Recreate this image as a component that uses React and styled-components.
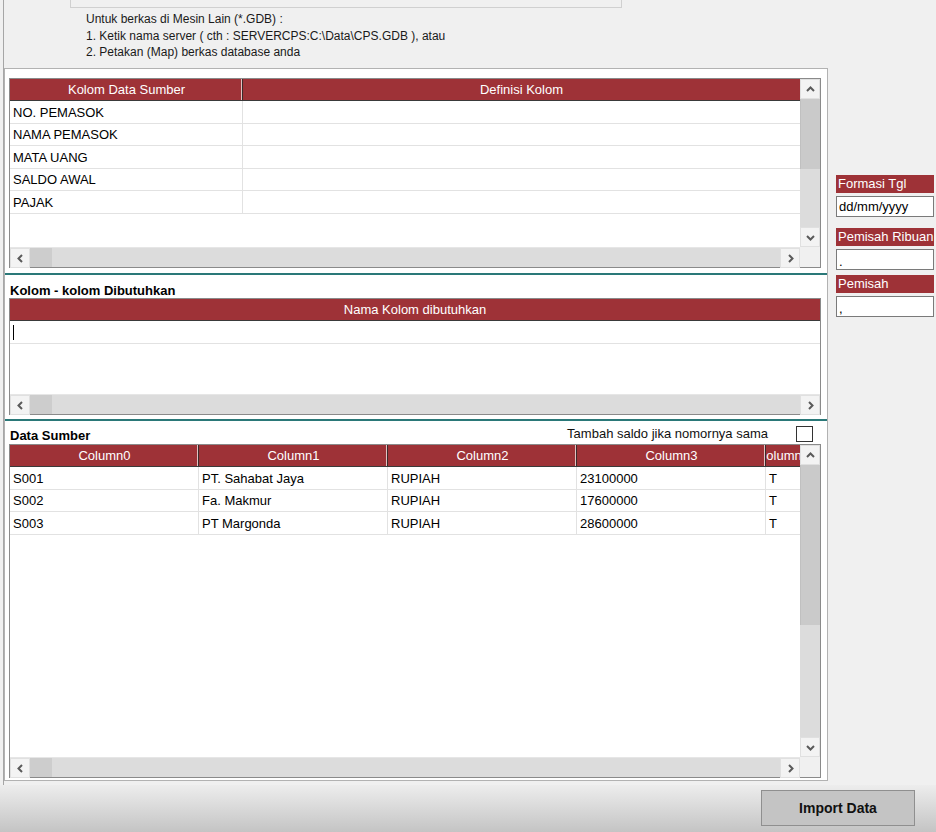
import React from 'react';
import styled, { createGlobalStyle } from 'styled-components';

const GlobalStyle = createGlobalStyle`
  html, body { margin: 0; padding: 0; }
  body { font-family: "Liberation Sans", Arial, sans-serif; background: #f0f0f0; }
  * { box-sizing: border-box; }
`;

const Page = styled.div`
  width: 936px;
  height: 832px;
  background: #f0f0f0;
  overflow: hidden;
  display: flex;
  flex-direction: column;
`;

const Workspace = styled.div`
  height: 785px;
  margin-left: 3px;
  border-left: 1px solid #a6a6a6;
  display: flex;
  flex-direction: column;
`;

const HintBox = styled.div`
  margin-left: 66px;
  width: 552px;
  height: 8px;
  border: 1px solid #d0d0d0;
  border-top: none;
  background: #f0f0f0;
`;

const Instructions = styled.div`
  height: 60px;
  padding-left: 82px;
  padding-top: 3px;
  font-size: 12px;
  line-height: 16.5px;
  color: #1a1a1a;
`;

const MainRow = styled.div`
  display: flex;
  align-items: flex-start;
`;

const MainPanel = styled.div`
  width: 824px;
  height: 713px;
  border: 1px solid #b2b2b2;
  background: #fff;
  display: flex;
  flex-direction: column;
  padding: 9px 0 2px 0;
`;

const GridFrame = styled.div`
  margin: 0 6px 0 4px;
  height: ${p => p.$height}px;
  border: 1px solid #8a8a8a;
  background: #fff;
  flex: 0 0 auto;
`;

const GridBody = styled.div`
  height: 100%;
  display: grid;
  grid-template-columns: ${p => (p.$hasV ? '1fr 20px' : '1fr')};
  grid-template-rows: 1fr 20px;
`;

const Viewport = styled.div`
  overflow: hidden;
  min-width: 0;
`;

const HeaderRow = styled.div`
  display: flex;
  height: 22px;
  background: #9e3237;
  border-bottom: 1px solid #3a3a3a;
`;

const HeaderCell = styled.div`
  flex: ${p => (p.$width ? `0 0 ${p.$width}px` : '1 1 auto')};
  min-width: 0;
  display: flex;
  align-items: center;
  justify-content: center;
  overflow: hidden;
  white-space: nowrap;
  color: #fff;
  font-size: 13px;
  box-shadow: ${p => (p.$last ? 'none' : 'inset -1px 0 0 #3a2a2a, inset -2px 0 0 #e2c2c2')};
`;

const DataRow = styled.div`
  display: flex;
  height: ${p => p.$h}px;
`;

const DataCell = styled.div`
  flex: ${p => (p.$width ? `0 0 ${p.$width}px` : '1 1 auto')};
  min-width: 0;
  display: flex;
  align-items: center;
  padding-left: 3px;
  padding-top: 1px;
  font-size: 13px;
  color: #000;
  white-space: nowrap;
  overflow: hidden;
  border-bottom: 1px solid #e2e2e2;
  border-right: ${p => (p.$last ? 'none' : '1px solid #e2e2e2')};
`;

const Caret = styled.span`
  display: inline-block;
  width: 1px;
  height: 15px;
  background: #000;
`;

const VScroll = styled.div`
  display: flex;
  flex-direction: column;
  background: #dcdcdc;
`;

const HScroll = styled.div`
  display: flex;
  background: #dcdcdc;
  border-top: 1px solid #e6e6e6;
`;

const ArrowBtn = styled.div`
  flex: 0 0 20px;
  width: 20px;
  height: 20px;
  display: flex;
  align-items: center;
  justify-content: center;
  background: #f3f3f3;
  border: 1px solid #e0e0e0;
`;

const VThumb = styled.div`
  flex: 0 0 ${p => p.$size}px;
  margin-top: ${p => p.$start}px;
  background: #cacaca;
  border-left: 1px solid #c0c0c0;
`;

const HThumb = styled.div`
  flex: 0 0 ${p => p.$size}px;
  background: #cdcdcd;
`;

const Spacer = styled.div`
  flex: 1 1 auto;
`;

const Corner = styled.div`
  background: #f0f0f0;
`;

const Separator = styled.div`
  height: 2px;
  background: #2a7878;
  margin-top: ${p => p.$mt}px;
  flex: 0 0 auto;
`;

const SectionLabel = styled.div`
  height: 23px;
  padding: 8px 0 0 5px;
  font-size: 13px;
  line-height: 16px;
  font-weight: bold;
  color: #000;
  flex: 0 0 auto;
`;

const LabelRow = styled.div`
  height: 23px;
  display: flex;
  justify-content: space-between;
  align-items: flex-end;
  padding: 0 14px 0 5px;
  flex: 0 0 auto;
`;

const BoldText = styled.span`
  font-size: 13px;
  line-height: 16px;
  font-weight: bold;
  color: #000;
`;

const CheckGroup = styled.label`
  align-self: flex-start;
  margin-top: 5px;
  display: flex;
  align-items: center;
  gap: 28px;
  font-size: 13px;
  line-height: 16px;
  color: #111;
`;

const CheckBox = styled.span`
  width: 17px;
  height: 16px;
  border: 1px solid #333;
  background: #fff;
`;

const SidePanel = styled.div`
  margin-left: 8px;
  margin-top: 107px;
  width: 98px;
  display: flex;
  flex-direction: column;
`;

const FieldGroup = styled.div`
  margin-top: ${p => p.$mt}px;
  display: flex;
  flex-direction: column;
  gap: 3px;
`;

const FieldLabel = styled.div`
  height: 18px;
  background: #9e3237;
  color: #fff;
  font-size: 13px;
  line-height: 18px;
  padding-left: 2px;
  white-space: nowrap;
  overflow: hidden;
`;

const FieldInput = styled.div`
  height: 21px;
  border: 1px solid #7a7a7a;
  background: #fff;
  font-size: 13px;
  line-height: ${p => (p.$low ? '24px' : '19px')};
  padding-left: 2px;
  color: #000;
`;

const Footer = styled.div`
  flex: 1 1 auto;
  background: linear-gradient(#ededed, #c4c4c4);
  display: flex;
  justify-content: flex-end;
  padding: 5px 21px 0 0;
`;

const ImportButton = styled.button`
  width: 154px;
  height: 36px;
  background: #c4c4c4;
  border: 1px solid #8f8f8f;
  font-family: "Liberation Sans", Arial, sans-serif;
  font-size: 14px;
  font-weight: bold;
  color: #111;
  padding: 0;
`;

function Chevron({ dir }) {
  const pts = {
    up: '1,6 4.5,2.5 8,6',
    down: '1,3 4.5,6.5 8,3',
    left: '6,1 2.5,4.5 6,8',
    right: '3,1 6.5,4.5 3,8',
  }[dir];
  return (
    <svg width="9" height="9" viewBox="0 0 9 9">
      <polyline points={pts} fill="none" stroke="#5a5a5a" strokeWidth="2" />
    </svg>
  );
}

function DataGrid({ height, columns, rows, vThumb, caret }) {
  const hasV = !!vThumb;
  return (
    <GridFrame $height={height}>
      <GridBody $hasV={hasV}>
        <Viewport>
          <HeaderRow>
            {columns.map((c, i) => (
              <HeaderCell key={i} $width={c.width} $last={i === columns.length - 1}>
                {c.title}
              </HeaderCell>
            ))}
          </HeaderRow>
          {rows.map((r, ri) => (
            <DataRow key={ri} $h={22.5}>
              {columns.map((c, ci) => (
                <DataCell key={ci} $width={c.width} $last={ci === columns.length - 1}>
                  {caret && ri === 0 && ci === 0 ? <Caret /> : r[ci]}
                </DataCell>
              ))}
            </DataRow>
          ))}
        </Viewport>
        {hasV && (
          <VScroll>
            <ArrowBtn><Chevron dir="up" /></ArrowBtn>
            <VThumb $start={vThumb.start} $size={vThumb.size} />
            <Spacer />
            <ArrowBtn><Chevron dir="down" /></ArrowBtn>
          </VScroll>
        )}
        <HScroll>
          <ArrowBtn><Chevron dir="left" /></ArrowBtn>
          <HThumb $size={22} />
          <Spacer />
          <ArrowBtn><Chevron dir="right" /></ArrowBtn>
        </HScroll>
        {hasV && <Corner />}
      </GridBody>
    </GridFrame>
  );
}

const sourceCols = [
  { title: 'Kolom Data Sumber', width: 233 },
  { title: 'Definisi Kolom' },
];
const sourceRows = [
  ['NO. PEMASOK', ''],
  ['NAMA PEMASOK', ''],
  ['MATA UANG', ''],
  ['SALDO AWAL', ''],
  ['PAJAK', ''],
];

const neededCols = [{ title: 'Nama Kolom dibutuhkan' }];

const dataCols = [
  { title: 'Column0', width: 189 },
  { title: 'Column1', width: 189 },
  { title: 'Column2', width: 189 },
  { title: 'Column3', width: 189 },
  { title: 'Column4', width: 34 },
];
const dataRows = [
  ['S001', 'PT. Sahabat Jaya', 'RUPIAH', '23100000', 'T'],
  ['S002', 'Fa. Makmur', 'RUPIAH', '17600000', 'T'],
  ['S003', 'PT Margonda', 'RUPIAH', '28600000', 'T'],
];

export default function App() {
  return (
    <>
      <GlobalStyle />
      <Page>
        <Workspace>
          <HintBox />
          <Instructions>
            <div>Untuk berkas di Mesin Lain (*.GDB) :</div>
            <div>1. Ketik nama server ( cth : SERVERCPS:C:\Data\CPS.GDB ), atau</div>
            <div>2. Petakan (Map) berkas database anda</div>
          </Instructions>
          <MainRow>
            <MainPanel>
              <DataGrid height={190} columns={sourceCols} rows={sourceRows} vThumb={{ start: 0, size: 70 }} />
              <Separator $mt={5} />
              <SectionLabel>Kolom - kolom Dibutuhkan</SectionLabel>
              <DataGrid height={117} columns={neededCols} rows={[['']]} caret />
              <Separator $mt={4} />
              <LabelRow>
                <BoldText>Data Sumber</BoldText>
                <CheckGroup>
                  Tambah saldo jika nomornya sama
                  <CheckBox />
                </CheckGroup>
              </LabelRow>
              <DataGrid height={334} columns={dataCols} rows={dataRows} vThumb={{ start: 0, size: 160 }} />
            </MainPanel>
            <SidePanel>
              <FieldGroup $mt={0}>
                <FieldLabel>Formasi Tgl</FieldLabel>
                <FieldInput>dd/mm/yyyy</FieldInput>
              </FieldGroup>
              <FieldGroup $mt={11}>
                <FieldLabel>Pemisah Ribuan</FieldLabel>
                <FieldInput $low>.</FieldInput>
              </FieldGroup>
              <FieldGroup $mt={5}>
                <FieldLabel>Pemisah</FieldLabel>
                <FieldInput $low>,</FieldInput>
              </FieldGroup>
            </SidePanel>
          </MainRow>
        </Workspace>
        <Footer>
          <ImportButton>Import Data</ImportButton>
        </Footer>
      </Page>
    </>
  );
}
